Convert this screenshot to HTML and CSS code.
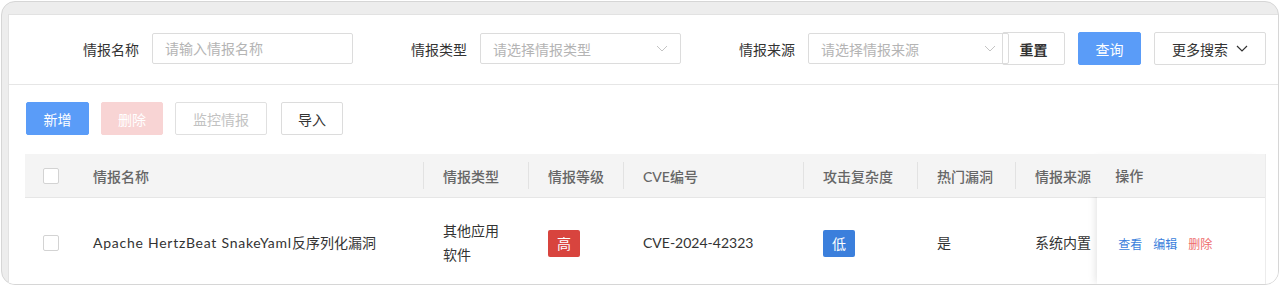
FILE: index.html
```html
<!DOCTYPE html>
<html lang="zh-CN">

<head>
    <meta charset="UTF-8">
    <meta name="viewport" content="width=device-width, initial-scale=1.0">
    <title>情报管理</title>
    <link rel="stylesheet" href="styles.css">
</head>

<body>
    <div class="frame">
        <div class="page">
            <form class="search">
                <div class="field">
                    <label>情报名称</label>
                    <input class="input" type="text" placeholder="请输入情报名称">
                </div>
                <div class="field">
                    <label>情报类型</label>
                    <div class="input select">
                        <span>请选择情报类型</span>
                        <svg width="12" height="7" viewBox="0 0 12 7"><path d="M1 1l5 5 5-5" fill="none" stroke="#c4c4c4" stroke-width="1"/></svg>
                    </div>
                </div>
                <div class="field">
                    <label>情报来源</label>
                    <div class="input select">
                        <span>请选择情报来源</span>
                        <svg width="12" height="7" viewBox="0 0 12 7"><path d="M1 1l5 5 5-5" fill="none" stroke="#c4c4c4" stroke-width="1"/></svg>
                    </div>
                </div>
                <button type="button" class="btn btn-reset">重置</button>
                <button type="button" class="btn btn-primary">查询</button>
                <button type="button" class="btn btn-more">更多搜索
                    <svg width="12" height="7" viewBox="0 0 12 7"><path d="M1 1l5 5 5-5" fill="none" stroke="#333" stroke-width="1.2"/></svg>
                </button>
            </form>

            <div class="toolbar">
                <button class="btn btn-primary">新增</button>
                <button class="btn btn-danger-off">删除</button>
                <button class="btn btn-off">监控情报</button>
                <button class="btn">导入</button>
            </div>

            <div class="table">
                <div class="table-main">
                    <table>
                        <colgroup>
                            <col style="width: 48px">
                            <col style="width: 350px">
                            <col style="width: 105px">
                            <col style="width: 95px">
                            <col style="width: 180px">
                            <col style="width: 114px">
                            <col style="width: 98px">
                            <col style="width: 130px">
                        </colgroup>
                        <thead>
                            <tr>
                                <th class="chk-cell"><span class="checkbox"></span></th>
                                <th class="name-cell">情报名称</th>
                                <th>情报类型</th>
                                <th>情报等级</th>
                                <th>CVE编号</th>
                                <th>攻击复杂度</th>
                                <th>热门漏洞</th>
                                <th>情报来源</th>
                            </tr>
                        </thead>
                        <tbody>
                            <tr>
                                <td class="chk-cell"><span class="checkbox"></span></td>
                                <td class="name-cell"><span class="latin">Apache HertzBeat SnakeYaml</span>反序列化漏洞</td>
                                <td>其他应用<br>软件</td>
                                <td><span class="tag tag-high">高</span></td>
                                <td>CVE-2024-42323</td>
                                <td><span class="tag tag-low">低</span></td>
                                <td>是</td>
                                <td>系统内置</td>
                            </tr>
                        </tbody>
                    </table>
                </div>
                <div class="table-fixed">
                    <div class="fixed-head">操作</div>
                    <div class="fixed-body">
                        <a class="op">查看</a>
                        <a class="op">编辑</a>
                        <a class="op op-del">删除</a>
                    </div>
                </div>
            </div>
        </div>
    </div>
</body>

</html>
```

FILE: styles.css
```css
body {
    margin: 0;
    background: #fff;
    font-family: Lato, "Noto Sans CJK SC", sans-serif;
    font-size: 14px;
    color: #333;
}

.frame {
    box-sizing: border-box;
    width: 1278px;
    height: 284px;
    margin: 1px;
    padding: 12px 0 0 6px;
    border: 1px solid #d6d6d6;
    border-radius: 14px;
    background: #ededed;
    overflow: hidden;
}

.page {
    height: 100%;
    background: #fff;
    border-top: 1px solid #e2e2e2;
    border-left: 1px solid #e2e2e2;
}

/* search bar */
.search {
    display: flex;
    align-items: center;
    height: 67px;
    padding: 0 0 2px 72px;
    margin: 0;
    border-bottom: 1px solid #e6e6e6;
}

.field {
    display: flex;
    align-items: center;
    margin-right: 56px;
}

.field:nth-child(3) {
    margin-right: 0;
}

.field label {
    width: 58px;
    margin-right: 13px;
    text-align: right;
    white-space: nowrap;
}

.input {
    box-sizing: border-box;
    width: 201px;
    height: 31px;
    padding: 0 12px;
    border: 1px solid #dcdcdc;
    border-radius: 2px;
    font-family: inherit;
    font-size: 14px;
    color: #333;
    outline: none;
    background: #fff;
}

.input::placeholder {
    color: #b4b4b4;
}

.select {
    display: flex;
    align-items: center;
    justify-content: space-between;
    color: #b4b4b4;
}

.btn {
    box-sizing: border-box;
    height: 33px;
    padding: 0 16px;
    border: 1px solid #dcdcdc;
    border-radius: 2px;
    background: #fff;
    font-family: inherit;
    font-size: 14px;
    color: #333;
    cursor: pointer;
}

.btn-reset {
    width: 63px;
    margin-left: -7px;
    background: transparent;
    font-weight: 700;
}

.btn-primary {
    width: 63px;
    margin-left: 13px;
    border-color: #5a9cf8;
    background: #5a9cf8;
    color: #fff;
}

.btn-more {
    display: flex;
    align-items: center;
    gap: 8px;
    width: 112px;
    margin-left: 13px;
    padding: 0 14px 0 17px;
}

/* toolbar */
.toolbar {
    display: flex;
    gap: 12px;
    margin-top: 17px;
    padding-left: 17px;
}

.toolbar .btn-primary {
    margin-left: 0;
}

.btn-danger-off {
    width: 62px;
    border-color: #f8d4d4;
    background: #f8d4d4;
    color: #fff;
}

.btn-off {
    width: 92px;
    color: #c2c2c2;
    border-color: #e0e0e0;
}

.toolbar .btn:last-child {
    width: 62px;
    margin-left: 2px;
}

/* table */
.table {
    display: flex;
    margin: 19px 12px 0 16px;
    border-right: 1px solid #ececec;
}

.table-main {
    width: 1073px;
    overflow: hidden;
}

table {
    table-layout: fixed;
    width: 1120px;
    border-collapse: collapse;
}

th {
    position: relative;
    height: 43px;
    padding: 0 20px;
    background: #f4f4f4;
    border-bottom: 1px solid #e6e6e6;
    text-align: left;
    font-weight: 500;
    color: #666;
    white-space: nowrap;
}

th + th:not(.name-cell)::before {
    content: "";
    position: absolute;
    left: 0;
    top: 8px;
    bottom: 8px;
    border-left: 1px solid #e2e2e2;
}

td {
    height: 48px;
    padding: 21px 20px;
    line-height: 24px;
    white-space: nowrap;
}

.latin {
    letter-spacing: 0.75px;
}

.chk-cell {
    padding: 0 0 0 18px;
}

.checkbox {
    display: block;
    box-sizing: border-box;
    width: 16px;
    height: 16px;
    border: 1px solid #d3d3d3;
    border-radius: 2px;
    background: #fff;
}

.tag {
    display: inline-block;
    width: 32px;
    height: 27px;
    line-height: 27px;
    border-radius: 2px;
    text-align: center;
    color: #fff;
    vertical-align: middle;
}

.tag-high {
    background: #d8443e;
}

.tag-low {
    background: #3b7fdc;
}

.table-fixed {
    width: 168px;
    box-shadow: -6px 0 8px -5px rgba(0, 0, 0, 0.12);
}

.fixed-head {
    box-sizing: border-box;
    height: 44px;
    padding-left: 18px;
    line-height: 43px;
    background: #f4f4f4;
    border-bottom: 1px solid #e6e6e6;
    font-weight: 500;
    color: #666;
}

.fixed-body {
    display: flex;
    align-items: center;
    height: 90px;
    padding-left: 21px;
}

.op {
    margin-right: 11px;
    font-size: 12px;
    color: #3b7fdc;
    cursor: pointer;
}

.op-del {
    color: #ee6b6b;
}
```
